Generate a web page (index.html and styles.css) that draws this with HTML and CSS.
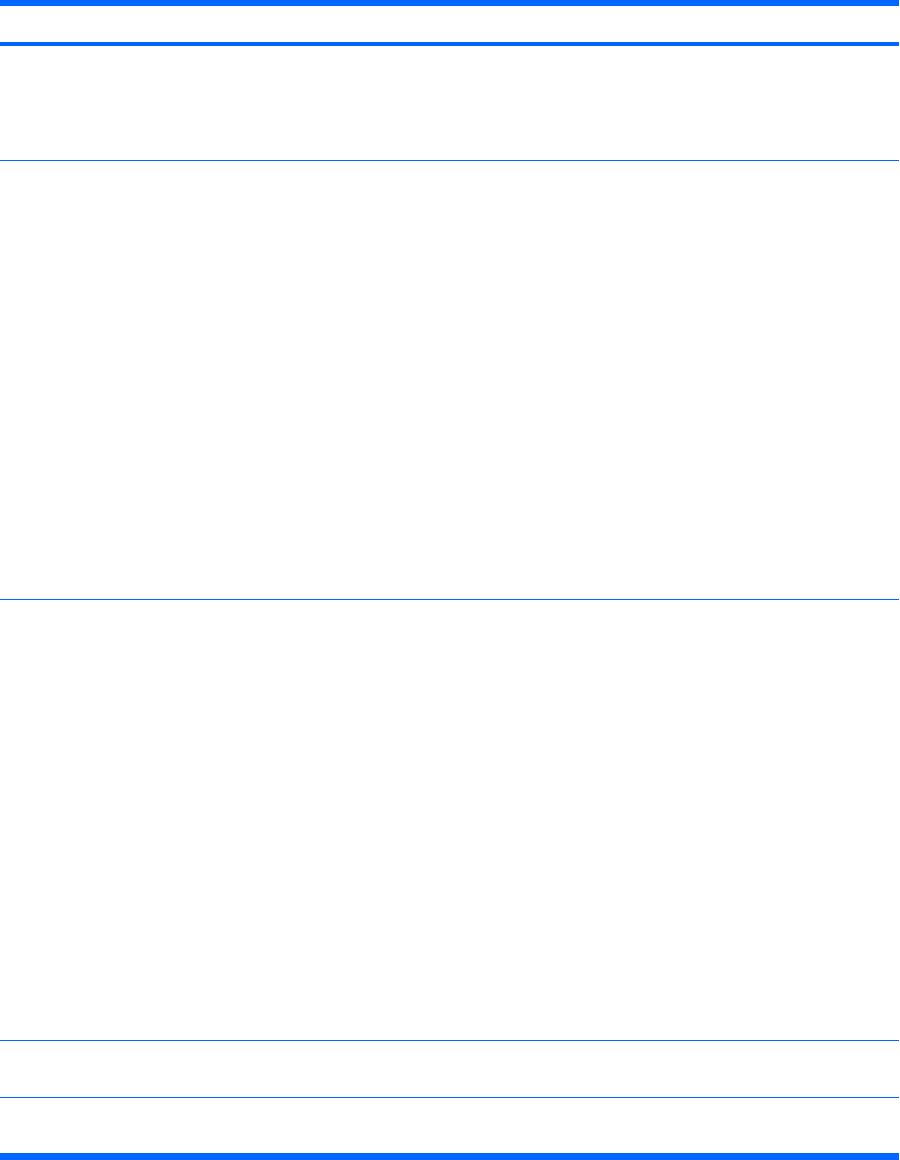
FILE: index.html
```html
<!DOCTYPE html>
<html lang="en">

<head>
    <meta charset="UTF-8">
    <meta name="viewport" content="width=device-width, initial-scale=1.0">
    <title>Table</title>
    <link rel="stylesheet" href="styles.css">
</head>

<body>
    <div class="sheet">
        <div class="head-row"></div>
        <div class="row row-short"></div>
        <div class="row row-tall"></div>
        <div class="row row-taller"></div>
        <div class="row row-small"></div>
        <div class="row row-last"></div>
    </div>
</body>

</html>
```

FILE: styles.css
```css
body {
    font-family: "Liberation Sans", Arial, sans-serif;
    background-color: #ffffff;
    margin: 0;
}

.sheet {
    width: 899px;
    display: flex;
    flex-direction: column;
    border-top: 6px solid #0066ff;
    border-bottom: 7px solid #0066ff;
}

.head-row {
    height: 36px;
    border-bottom: 4px solid #0066ff;
}

.row {
    border-bottom: 1px solid #0066ff;
}

.row-short {
    height: 114px;
}

.row-tall {
    height: 438px;
}

.row-taller {
    height: 440px;
}

.row-small {
    height: 56px;
}

.row-last {
    height: 55px;
    border-bottom: none;
}
```
